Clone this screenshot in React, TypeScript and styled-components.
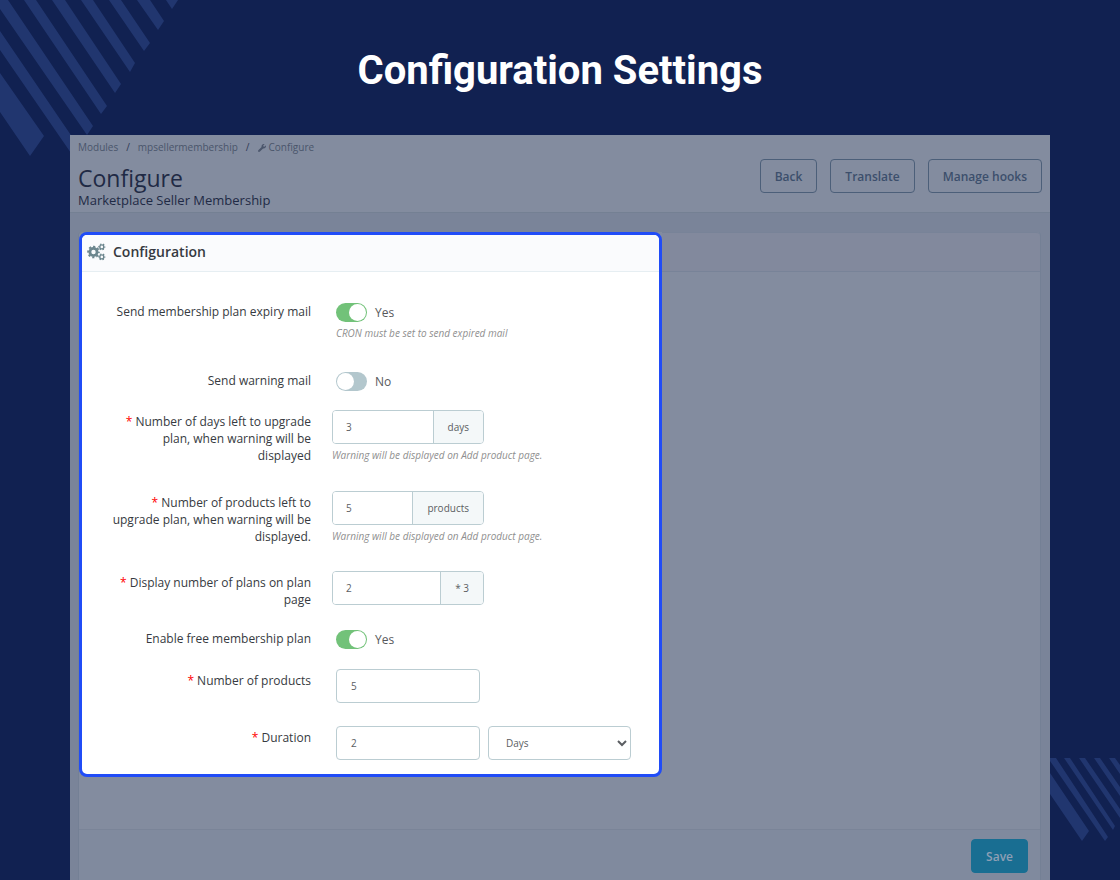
import React from "react";
import styled, { createGlobalStyle } from "styled-components";
import { FaWrench } from "react-icons/fa";

const GlobalStyle = createGlobalStyle`
  *, *::before, *::after { box-sizing: border-box; }
  body {
    margin: 0;
    background: #112151;
    font-family: "Open Sans", "Noto Sans", sans-serif;
    font-size: 12px;
    line-height: 17px;
  }
  h1, h2, h3, p { margin: 0; }
  button, input, select { font-family: inherit; margin: 0; }
`;

const Page = styled.div`
  position: relative;
  display: flex;
  flex-direction: column;
  min-height: 100vh;
  overflow: hidden;
`;

const Stripes = styled.svg<{ $corner: "top" | "bottom" }>`
  position: absolute;
  fill: #21366f;
  ${({ $corner }) => ($corner === "top" ? "top: 0; left: 0;" : "bottom: 38px; right: 0;")}
`;

const Banner = styled.h1`
  padding: 47px 24px 40px;
  color: #fff;
  font-family: Roboto, sans-serif;
  font-size: 40px;
  font-weight: 700;
  line-height: 48px;
  text-align: center;
`;

const Screen = styled.main`
  position: relative;
  display: flex;
  flex: 1;
  flex-direction: column;
  margin: 0 70px;
  background: #7a8499;
`;

const PageHeader = styled.header`
  display: flex;
  justify-content: space-between;
  height: 78px;
  padding: 0 8px;
  border-bottom: 1px solid #748093;
  background: #838c9f;
`;

const Crumbs = styled.nav`
  display: flex;
  align-items: center;
  height: 25px;
  color: #4a556b;
  font-size: 10px;
`;

const Crumb = styled.a`
  display: inline-flex;
  align-items: center;
  gap: 3px;
  color: inherit;
  text-decoration: none;
`;

const Slash = styled.span`
  padding: 0 8px;
  color: #2f3a54;
`;

const Title = styled.h2`
  margin-top: 2px;
  color: #1f2a45;
  font-size: 23px;
  font-weight: 400;
  line-height: 32px;
`;

const Subtitle = styled.p`
  color: #1f2a45;
  font-size: 13px;
  line-height: 12px;
`;

const Actions = styled.div`
  display: flex;
  gap: 13px;
  padding-top: 24px;
`;

const Button = styled.button<{ $primary?: boolean }>`
  height: 34px;
  padding: 0 14px;
  border: 1px solid ${({ $primary }) => ($primary ? "#196e92" : "#4c5f79")};
  border-radius: 4px;
  background: ${({ $primary }) => ($primary ? "#196e92" : "transparent")};
  color: ${({ $primary }) => ($primary ? "#8d9fb5" : "#3c4f6c")};
  font-size: 12px;
  font-weight: 600;
`;

const Card = styled.div`
  display: flex;
  flex: 1;
  flex-direction: column;
  margin: 19px 9px 0 8px;
  border: solid #748095;
  border-width: 0 1px;
  border-radius: 4px 4px 0 0;
  background: #838c9f;
`;

const CardTop = styled.div`
  display: flex;
`;

const CardHeading = styled.div`
  flex: 1;
  height: 40px;
  border: solid #788398;
  border-width: 1px 0;
  border-radius: 0 4px 0 0;
  background: #82899d;
`;

const CardFooter = styled.footer`
  display: flex;
  justify-content: flex-end;
  align-items: flex-start;
  margin-top: auto;
  padding: 9px 12px 7px;
  border-top: 1px solid #7a8498;
  background: #808a9e;
`;

const Highlight = styled.form`
  flex: 0 1 583px;
  border: 3px solid #204cf7;
  border-radius: 8px;
  background: #fff;
  overflow: hidden;
`;

const PanelTitle = styled.h3`
  display: flex;
  align-items: center;
  gap: 7px;
  height: 37px;
  padding: 0 5px 4px;
  border-bottom: 1px solid #e6eef2;
  background: #fafbfd;
  color: #363a41;
  font-size: 14px;
  font-weight: 600;
`;

const GearIcon = styled.svg`
  fill: none;
  stroke: #6c868e;
`;

const Fields = styled.div`
  padding: 31px 20px 14px;
`;

const Row = styled.div<{ $after?: number }>`
  display: flex;
  align-items: flex-start;
  margin-bottom: ${({ $after = 0 }) => $after}px;
`;

const Label = styled.label<{ $boxed?: boolean }>`
  flex: 0 0 209px;
  padding-top: ${({ $boxed }) => ($boxed ? 3 : 0)}px;
  padding-left: 7px;
  color: #363a41;
  text-align: right;
`;

const Star = styled.span`
  color: #f00;
`;

const Control = styled.div<{ $wide?: boolean }>`
  display: flex;
  flex: 1;
  flex-wrap: wrap;
  gap: 4px 8px;
  padding-left: ${({ $wide }) => ($wide ? 21 : 25)}px;
`;

const Hint = styled.p`
  flex: 0 0 100%;
  color: #8f8f8f;
  font-size: 10px;
  font-style: italic;
  line-height: 15px;
`;

const SwitchLine = styled.span`
  display: flex;
  align-items: center;
  gap: 8px;
  width: 100%;
  height: 19px;
  color: #57595c;
`;

const SwitchBox = styled.input`
  appearance: none;
  display: flex;
  width: 31px;
  height: 19px;
  padding: 1px;
  border-radius: 10px;
  background: #b3c7cd;

  &::before {
    content: "";
    width: 17px;
    height: 17px;
    border-radius: 50%;
    background: #fff;
  }

  &:checked {
    justify-content: flex-end;
    background: #72c279;
  }
`;

const Group = styled.div`
  display: flex;
  width: 152px;
  height: 34px;
  border: 1px solid #bbcdd2;
  border-radius: 4px;
  overflow: hidden;
`;

const GroupInput = styled.input`
  flex: 1;
  min-width: 0;
  padding: 0 13px;
  border: 0;
  color: #5b5e62;
  font-size: 10px;
`;

const Addon = styled.span`
  display: flex;
  align-items: center;
  padding: 0 14px;
  border-left: 1px solid #bbcdd2;
  background: #f4f8f9;
  color: #5b5e62;
  font-size: 10px;
`;

const TextInput = styled.input`
  width: 144px;
  height: 34px;
  padding: 0 14px;
  border: 1px solid #bbcdd2;
  border-radius: 4px;
  color: #5b5e62;
  font-size: 10px;
`;

const Select = styled.select`
  width: 143px;
  height: 34px;
  padding: 0 0 0 13px;
  border: 1px solid #bbcdd2;
  border-radius: 4px;
  background: #fff;
  color: #5b5e62;
  font-size: 10px;
`;

function Gears() {
  return (
    <GearIcon width="19" height="20" viewBox="0 -2 19 20" aria-hidden="true">
      <circle cx="6.5" cy="9" r="3.6" strokeWidth="2.8" />
      <circle cx="6.5" cy="9" r="5.4" strokeWidth="1.8" strokeDasharray="2.2 2.04" strokeDashoffset="1.1" />
      <circle cx="14.8" cy="3.9" r="2" strokeWidth="1.4" />
      <circle cx="14.8" cy="3.9" r="3" strokeWidth="1.1" strokeDasharray="1.5 1.64" strokeDashoffset="0.75" />
      <circle cx="14.8" cy="13.9" r="2" strokeWidth="1.4" />
      <circle cx="14.8" cy="13.9" r="3" strokeWidth="1.1" strokeDasharray="1.5 1.64" strokeDashoffset="0.75" />
    </GearIcon>
  );
}

function Switch({ id, on }: { id: string; on: boolean }) {
  const [checked, setChecked] = React.useState(on);
  return (
    <SwitchLine>
      <SwitchBox
        id={id}
        type="checkbox"
        role="switch"
        checked={checked}
        onChange={(e) => setChecked(e.target.checked)}
      />
      {checked ? "Yes" : "No"}
    </SwitchLine>
  );
}

function UnitInput({ id, value, unit }: { id: string; value: string; unit: string }) {
  return (
    <Group>
      <GroupInput id={id} defaultValue={value} />
      <Addon>{unit}</Addon>
    </Group>
  );
}

export default function App() {
  return (
    <>
      <GlobalStyle />
      <Page>
        <Stripes $corner="top" width="180" height="160" aria-hidden="true">
          <path d="M0 73 44 136 30 156 0 112ZM0 31 79 147 73 156 0 50ZM0 0H8L93 126 87 135 0 9ZM24 0H36L107 106 101 114ZM52 0H65L121 84 115 93ZM81 0H93L135 63 130 72ZM109 0H121L150 43 144 51ZM137 0H150L164 21 158 30ZM166 0H178L172 9Z" />
        </Stripes>
        <Stripes $corner="bottom" width="70" height="84" aria-hidden="true">
          <path d="M0 15 39 73 32 83 0 36ZM0 0H6L58 79 55 83 0 3ZM14 0H20L65 68 63 72ZM29 0H35L70 51V60ZM44 0H50L70 29V38ZM59 0H65L70 7V16Z" />
        </Stripes>
        <Banner>Configuration Settings</Banner>
        <Screen>
          <PageHeader>
            <div>
              <Crumbs aria-label="Breadcrumb">
                <Crumb href="#modules">Modules</Crumb>
                <Slash>/</Slash>
                <Crumb href="#module">mpsellermembership</Crumb>
                <Slash>/</Slash>
                <Crumb href="#configure">
                  <FaWrench size={8} />
                  Configure
                </Crumb>
              </Crumbs>
              <Title>Configure</Title>
              <Subtitle>Marketplace Seller Membership</Subtitle>
            </div>
            <Actions>
              <Button type="button">Back</Button>
              <Button type="button">Translate</Button>
              <Button type="button">Manage hooks</Button>
            </Actions>
          </PageHeader>
          <Card>
            <CardTop>
              <Highlight id="configuration">
                <PanelTitle>
                  <Gears />
                  Configuration
                </PanelTitle>
                <Fields>
                  <Row $after={31}>
                    <Label htmlFor="expiry">Send membership plan expiry mail</Label>
                    <Control>
                      <Switch id="expiry" on />
                      <Hint>CRON must be set to send expired mail</Hint>
                    </Control>
                  </Row>
                  <Row $after={19}>
                    <Label htmlFor="warning">Send warning mail</Label>
                    <Control>
                      <Switch id="warning" on={false} />
                    </Control>
                  </Row>
                  <Row $after={27}>
                    <Label htmlFor="days" $boxed>
                      <Star>*</Star> Number of days left to upgrade plan, when warning will be displayed
                    </Label>
                    <Control $wide>
                      <UnitInput id="days" value="3" unit="days" />
                      <Hint>Warning will be displayed on Add product page.</Hint>
                    </Control>
                  </Row>
                  <Row $after={26}>
                    <Label htmlFor="left" $boxed>
                      <Star>*</Star> Number of products left to upgrade plan, when warning will be displayed.
                    </Label>
                    <Control $wide>
                      <UnitInput id="left" value="5" unit="products" />
                      <Hint>Warning will be displayed on Add product page.</Hint>
                    </Control>
                  </Row>
                  <Row $after={22}>
                    <Label htmlFor="plans" $boxed>
                      <Star>*</Star> Display number of plans on plan page
                    </Label>
                    <Control $wide>
                      <UnitInput id="plans" value="2" unit="* 3" />
                    </Control>
                  </Row>
                  <Row $after={20}>
                    <Label htmlFor="free">Enable free membership plan</Label>
                    <Control>
                      <Switch id="free" on />
                    </Control>
                  </Row>
                  <Row $after={23}>
                    <Label htmlFor="products" $boxed>
                      <Star>*</Star> Number of products
                    </Label>
                    <Control>
                      <TextInput id="products" defaultValue="5" />
                    </Control>
                  </Row>
                  <Row>
                    <Label htmlFor="duration" $boxed>
                      <Star>*</Star> Duration
                    </Label>
                    <Control>
                      <TextInput id="duration" defaultValue="2" />
                      <Select aria-label="Duration unit" defaultValue="Days">
                        <option>Days</option>
                        <option>Months</option>
                        <option>Years</option>
                      </Select>
                    </Control>
                  </Row>
                </Fields>
              </Highlight>
              <CardHeading />
            </CardTop>
            <CardFooter>
              <Button $primary type="submit" form="configuration">
                Save
              </Button>
            </CardFooter>
          </Card>
        </Screen>
      </Page>
    </>
  );
}
